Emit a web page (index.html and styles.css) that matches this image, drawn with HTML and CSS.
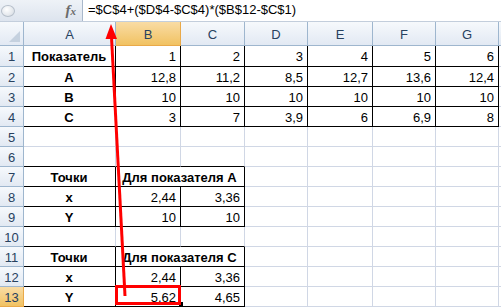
FILE: index.html
```html
<!DOCTYPE html>
<html lang="ru">
<head>
    <meta charset="UTF-8">
    <title>Лист1</title>
    <link rel="stylesheet" href="styles.css">
</head>
<body>
    <div class="formula-bar">
        <div class="fb-tools">
            <span class="grip"></span>
            <span class="fx">f<i>x</i></span>
        </div>
        <div class="fb-input">=$C$4+($D$4-$C$4)*($B$12-$C$1)</div>
    </div>

    <div class="sheet">
        <!-- column headers -->
        <div class="corner"></div>
        <div class="ch">A</div>
        <div class="ch sel">B</div>
        <div class="ch">C</div>
        <div class="ch">D</div>
        <div class="ch">E</div>
        <div class="ch">F</div>
        <div class="ch">G</div>
        <div class="ch"></div>

        <!-- row 1 -->
        <div class="rh">1</div>
        <div class="c k lbl">Показатель</div>
        <div class="c k num">1</div>
        <div class="c k num">2</div>
        <div class="c k num">3</div>
        <div class="c k num">4</div>
        <div class="c k num">5</div>
        <div class="c k num">6</div>
        <div class="c"></div>

        <!-- row 2 -->
        <div class="rh">2</div>
        <div class="c k lbl">A</div>
        <div class="c k num">12,8</div>
        <div class="c k num">11,2</div>
        <div class="c k num">8,5</div>
        <div class="c k num">12,7</div>
        <div class="c k num">13,6</div>
        <div class="c k num">12,4</div>
        <div class="c"></div>

        <!-- row 3 -->
        <div class="rh">3</div>
        <div class="c k lbl">B</div>
        <div class="c k num">10</div>
        <div class="c k num">10</div>
        <div class="c k num">10</div>
        <div class="c k num">10</div>
        <div class="c k num">10</div>
        <div class="c k num">10</div>
        <div class="c"></div>

        <!-- row 4 -->
        <div class="rh">4</div>
        <div class="c k lbl">C</div>
        <div class="c k num">3</div>
        <div class="c k num">7</div>
        <div class="c k num">3,9</div>
        <div class="c k num">6</div>
        <div class="c k num">6,9</div>
        <div class="c k num">8</div>
        <div class="c"></div>

        <!-- row 5 -->
        <div class="rh">5</div>
        <div class="c"></div><div class="c"></div><div class="c"></div><div class="c"></div>
        <div class="c"></div><div class="c"></div><div class="c"></div><div class="c"></div>

        <!-- row 6 -->
        <div class="rh">6</div>
        <div class="c kb"></div><div class="c kb"></div><div class="c kb"></div><div class="c"></div>
        <div class="c"></div><div class="c"></div><div class="c"></div><div class="c"></div>

        <!-- row 7 -->
        <div class="rh">7</div>
        <div class="c k lbl">Точки</div>
        <div class="c k lbl span2">Для показателя А</div>
        <div class="c"></div><div class="c"></div><div class="c"></div><div class="c"></div><div class="c"></div>

        <!-- row 8 -->
        <div class="rh">8</div>
        <div class="c k lbl">x</div>
        <div class="c k num">2,44</div>
        <div class="c k num">3,36</div>
        <div class="c"></div><div class="c"></div><div class="c"></div><div class="c"></div><div class="c"></div>

        <!-- row 9 -->
        <div class="rh">9</div>
        <div class="c k lbl">Y</div>
        <div class="c k num">10</div>
        <div class="c k num">10</div>
        <div class="c"></div><div class="c"></div><div class="c"></div><div class="c"></div><div class="c"></div>

        <!-- row 10 -->
        <div class="rh">10</div>
        <div class="c kb"></div><div class="c kb"></div><div class="c kb"></div><div class="c"></div>
        <div class="c"></div><div class="c"></div><div class="c"></div><div class="c"></div>

        <!-- row 11 -->
        <div class="rh">11</div>
        <div class="c k lbl">Точки</div>
        <div class="c k lbl span2">Для показателя С</div>
        <div class="c"></div><div class="c"></div><div class="c"></div><div class="c"></div><div class="c"></div>

        <!-- row 12 -->
        <div class="rh">12</div>
        <div class="c k lbl">x</div>
        <div class="c k num">2,44</div>
        <div class="c k num">3,36</div>
        <div class="c"></div><div class="c"></div><div class="c"></div><div class="c"></div><div class="c"></div>

        <!-- row 13 -->
        <div class="rh sel">13</div>
        <div class="c k lbl">Y</div>
        <div class="c k num">5,62</div>
        <div class="c k num">4,65</div>
        <div class="c"></div><div class="c"></div><div class="c"></div><div class="c"></div><div class="c"></div>
    </div>

    <!-- callout: the active cell and an arrow up to the formula -->
    <svg class="callout" width="501" height="308" viewBox="0 0 501 308">
        <rect x="179" y="302" width="4" height="4" fill="#000"/>
        <rect x="116.5" y="286.5" width="63" height="17" fill="none" stroke="#f00" stroke-width="3"/>
        <line x1="125" y1="296" x2="111.5" y2="37" stroke="#f00" stroke-width="3"/>
        <polygon points="111,24 105.5,39 117,39" fill="#f00"/>
    </svg>
</body>
</html>
```

FILE: styles.css
```css
* {
    box-sizing: border-box;
}

body {
    margin: 0;
    width: 501px;
    height: 308px;
    overflow: hidden;
    position: relative;
    background: #fff;
    font-family: "Liberation Sans", Arial, sans-serif;
    font-size: 13px;
    color: #000;
}

/* formula bar */
.formula-bar {
    display: flex;
    height: 22px;
    background: linear-gradient(#eef2f7, #dde4ee);
    border-bottom: 1px solid #c3cedc;
}

.fb-tools {
    width: 82px;
    display: flex;
    align-items: center;
}

.grip {
    width: 14px;
    height: 12px;
    margin-left: 1px;
    border-radius: 50%;
    border: 1px solid #b6bfca;
    background: radial-gradient(circle at 40% 35%, #fff, #d3d9e1);
}

.fx {
    margin-left: auto;
    margin-right: 6px;
    font-family: "Liberation Serif", serif;
    font-style: italic;
    font-weight: bold;
    font-size: 15px;
    color: #6b6b6b;
}

.fx i {
    font-size: 11px;
}

.fb-input {
    flex: 1;
    background: #fff;
    border-left: 1px solid #a9b8cb;
    padding-left: 5px;
    line-height: 20px;
    font-size: 13px;
    white-space: nowrap;
}

/* grid */
.sheet {
    display: grid;
    grid-template-columns: 24px 92px 65px 64px 63px 65px 63px 63px 1fr;
    grid-template-rows: 24px 21px repeat(12, 20px);
}

.corner,
.ch,
.rh {
    background: linear-gradient(#f6f9fc, #e2e9f3);
    border-right: 1px solid #9eb6ce;
    border-bottom: 1px solid #9eb6ce;
    color: #27415f;
    text-align: center;
}

.corner {
    position: relative;
}

.corner::after {
    content: "";
    position: absolute;
    right: 3px;
    bottom: 3px;
    border-left: 11px solid transparent;
    border-bottom: 11px solid #c5d1df;
}

.ch {
    padding-top: 2px;
    line-height: 22px;
}

.rh {
    line-height: 21px;
}

.ch.sel,
.rh.sel {
    background: linear-gradient(#f9dca5, #f1c262);
    border-color: #e9a949;
}

.c {
    border-right: 1px solid #d0d7e5;
    border-bottom: 1px solid #d0d7e5;
    padding: 0 4px 0 3px;
    line-height: 21px;
    white-space: nowrap;
    overflow: hidden;
}

.c.k {
    border-right-color: #000;
    border-bottom-color: #000;
}

.c.kb {
    border-bottom-color: #000;
}

.num {
    text-align: right;
}

.lbl {
    text-align: center;
    font-weight: bold;
}

.span2 {
    grid-column: span 2;
}

.callout {
    position: absolute;
    left: 0;
    top: 0;
    pointer-events: none;
}
```
